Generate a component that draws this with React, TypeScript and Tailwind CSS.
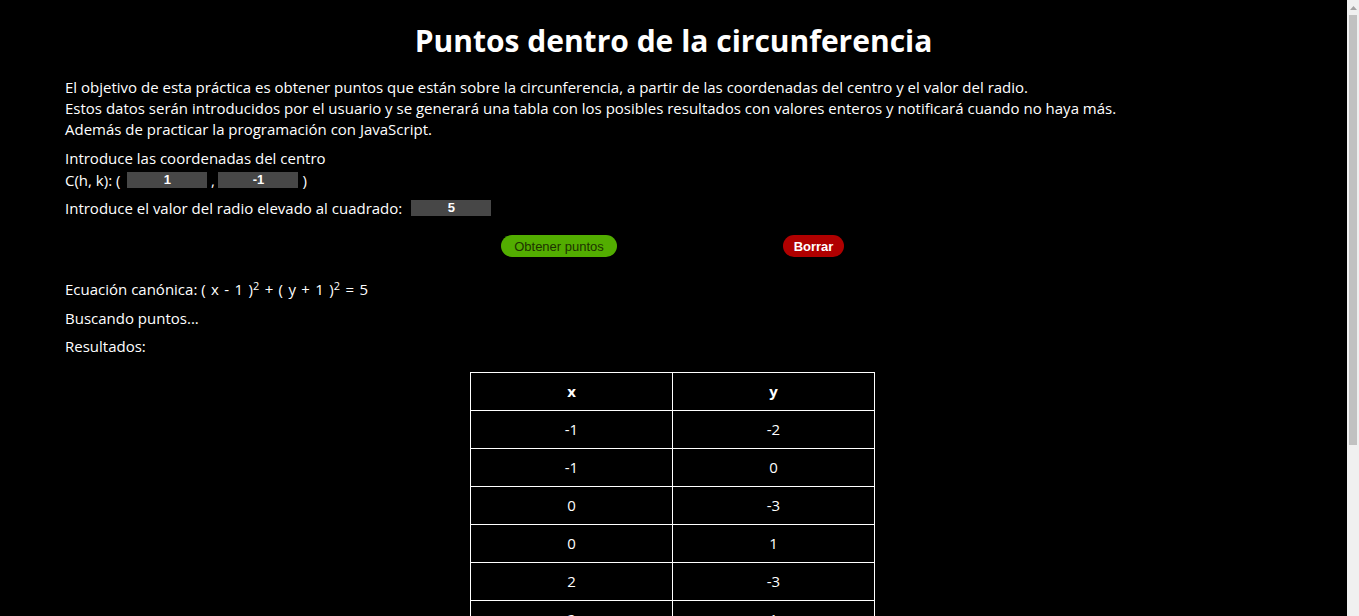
import React from "react";

const puntos: [number, number][] = [
  [-1, -2],
  [-1, 0],
  [0, -3],
  [0, 1],
  [2, -3],
  [2, 1],
];

const Campo = ({ valor, className = "" }: { valor: string; className?: string }) => (
  <span className={`inline-block w-[80px] h-[16px] bg-[#474747] text-center text-[13px] leading-[16px] font-['Liberation_Sans',Arial,sans-serif] align-middle ${className}`}>
    {valor}
  </span>
);

const Scrollbar = () => (
  <div className="w-[12px] shrink-0 bg-[#f0f0f0] flex flex-col items-center">
    <div className="h-[15px] w-full flex items-center justify-center">
      <svg width="7" height="4" viewBox="0 0 7 4">
        <path d="M0 4 L3.5 0 L7 4 Z" fill="#a3a3a3" />
      </svg>
    </div>
    <div className="w-[8px] h-[430px] bg-[#c1c1c1]" />
  </div>
);

export default function App() {
  return (
    <div className="flex h-[616px] w-full overflow-hidden bg-black text-white font-['Open_Sans','Noto_Sans',sans-serif]">
      <div className="flex-1 flex flex-col min-w-0">
        <div className="h-px bg-[#5c5c5c]" />
        <main className="px-[65px] text-[15px] leading-[21px]">
          {/* titulo */}
          <h1 className="text-center text-[30px] font-bold leading-[40px] mt-[21px] mb-[16px]">
            Puntos dentro de la circunferencia
          </h1>

          <p>
            El objetivo de esta práctica es obtener puntos que están sobre la circunferencia, a partir de las coordenadas del centro y el valor del radio.
            <br />
            Estos datos serán introducidos por el usuario y se generará una tabla con los posibles resultados con valores enteros y notificará cuando no haya más.
            <br />
            Además de practicar la programación con JavaScript.
          </p>

          <div className="mt-[8px]">
            <p>Introduce las coordenadas del centro</p>
            <p className="flex items-center h-[22px]">
              <span>C(h, k): (</span>
              <Campo valor="1" className="ml-[7px] font-bold" />
              <span className="w-[11px] text-center">,</span>
              <Campo valor="-1" className="font-bold" />
              <span className="ml-[4px]">)</span>
            </p>
          </div>

          <p className="flex items-center mt-[6px] h-[22px]">
            <span>Introduce el valor del radio elevado al cuadrado:</span>
            <Campo valor="5" className="ml-[9px] font-bold" />
          </p>

          {/* botones */}
          <div className="flex items-center mt-[16px] h-[22px] font-['Liberation_Sans',Arial,sans-serif] text-[13px]">
            <button className="ml-[436px] w-[116px] h-[22px] rounded-full bg-[#52ad00] text-[#1d3300]">
              Obtener puntos
            </button>
            <button className="ml-[166px] w-[61px] h-[22px] rounded-full bg-[#b00000] text-white font-bold">
              Borrar
            </button>
          </div>

          <p className="mt-[22px]">
            Ecuación canónica: <span className="[word-spacing:1.5px]">( x - 1 )<sup className="text-[11px]">2</sup> + ( y + 1 )<sup className="text-[11px]">2</sup> = 5</span>
          </p>
          <p className="mt-[8px]">Buscando puntos...</p>
          <p className="mt-[7px]">Resultados:</p>

          <div className="flex justify-center mt-[15px] pr-[2px]">
            <table className="w-[405px] border-collapse text-[15px]">
              <thead>
                <tr className="h-[38px]">
                  <th className="border border-white w-1/2 font-bold">x</th>
                  <th className="border border-white w-1/2 font-bold">y</th>
                </tr>
              </thead>
              <tbody>
                {puntos.map(([x, y], i) => (
                  <tr key={i} className="h-[38px]">
                    <td className="border border-white text-center">{x}</td>
                    <td className="border border-white text-center">{y}</td>
                  </tr>
                ))}
              </tbody>
            </table>
          </div>
        </main>
      </div>
      <Scrollbar />
    </div>
  );
}
